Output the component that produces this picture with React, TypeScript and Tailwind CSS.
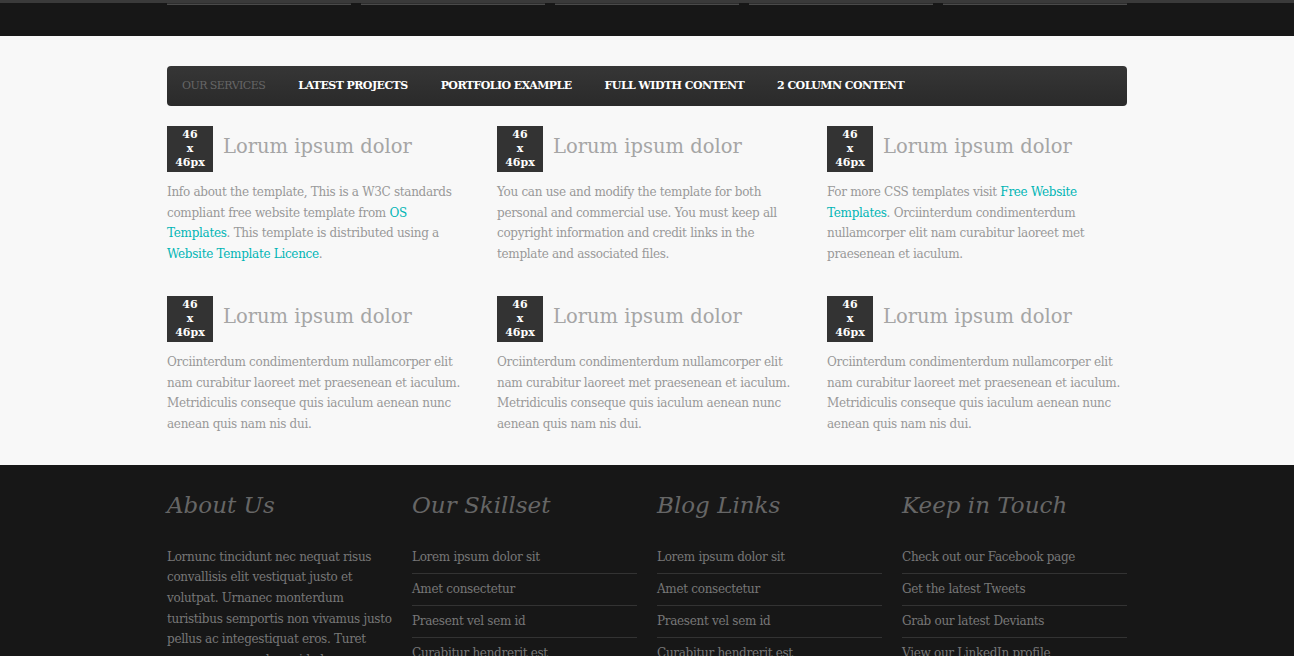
import React from 'react';

const serif = { fontFamily: '"DejaVu Serif", Georgia, serif' };

const navItems = ['Our Services', 'Latest Projects', 'Portfolio Example', 'Full Width Content', '2 Column Content'];

const Placeholder = () => (
  <div className="w-[46px] h-[46px] shrink-0 bg-[#333333] text-white text-[11px] leading-[14px] font-bold flex flex-col items-center justify-center">
    <span>46</span>
    <span>x</span>
    <span>46px</span>
  </div>
);

const Link = ({ children }: { children: React.ReactNode }) => (
  <a href="#" className="text-[#00b5b5]">{children}</a>
);

const services: { body: React.ReactNode }[] = [
  {
    body: (
      <>
        Info about the template, This is a W3C standards compliant free website template from <Link>OS Templates</Link>. This template is distributed using a <Link>Website Template Licence</Link>.
      </>
    ),
  },
  {
    body: <>You can use and modify the template for both personal and commercial use. You must keep all copyright information and credit links in the template and associated files.</>,
  },
  {
    body: (
      <>
        For more CSS templates visit <Link>Free Website Templates</Link>. Orciinterdum condimenterdum nullamcorper elit nam curabitur laoreet met praesenean et iaculum.
      </>
    ),
  },
  { body: <>Orciinterdum condimenterdum nullamcorper elit nam curabitur laoreet met praesenean et iaculum. Metridiculis conseque quis iaculum aenean nunc aenean quis nam nis dui.</> },
  { body: <>Orciinterdum condimenterdum nullamcorper elit nam curabitur laoreet met praesenean et iaculum. Metridiculis conseque quis iaculum aenean nunc aenean quis nam nis dui.</> },
  { body: <>Orciinterdum condimenterdum nullamcorper elit nam curabitur laoreet met praesenean et iaculum. Metridiculis conseque quis iaculum aenean nunc aenean quis nam nis dui.</> },
];

const footerLists = [
  { title: 'Our Skillset', items: ['Lorem ipsum dolor sit', 'Amet consectetur', 'Praesent vel sem id', 'Curabitur hendrerit est'] },
  { title: 'Blog Links', items: ['Lorem ipsum dolor sit', 'Amet consectetur', 'Praesent vel sem id', 'Curabitur hendrerit est'] },
  { title: 'Keep in Touch', items: ['Check out our Facebook page', 'Get the latest Tweets', 'Grab our latest Deviants', 'View our LinkedIn profile'] },
];

export default function App() {
  return (
    <div className="min-h-screen bg-[#171717]" style={serif}>
      {/* top bar */}
      <div className="h-[36px] bg-[#171717] border-t-[3px] border-[#3a3a3a]">
        <div className="w-[960px] mx-auto grid grid-cols-5 gap-[10px]">
          {[0, 1, 2, 3, 4].map((i) => (
            <div key={i} className="h-[2px] bg-[#2e2e2e] border-b border-[#4a4a4a]" />
          ))}
        </div>
      </div>

      {/* content */}
      <div className="bg-[#f8f8f8] pt-[30px] pb-[30px]">
        <div className="w-[960px] mx-auto">
          <nav className="h-[40px] rounded-[4px] bg-gradient-to-b from-[#363636] to-[#2a2a2a] flex items-center px-[15px] gap-[33px]">
            {navItems.map((item, i) => (
              <a
                key={item}
                href="#"
                className={`uppercase text-[11px] tracking-[-0.55px] ${i === 0 ? 'text-[#666666]' : 'text-white font-bold'}`}
              >
                {item}
              </a>
            ))}
          </nav>

          <div className="grid grid-cols-3 gap-x-[30px] gap-y-[31px] mt-[20px]">
            {services.map((s, i) => (
              <div key={i}>
                <div className="flex items-center gap-[10px]">
                  <Placeholder />
                  <h2 className="text-[19.5px] text-[#a5a5a5] leading-none pb-[4px]">Lorum ipsum dolor</h2>
                </div>
                <p className="mt-[10px] text-[12px] leading-[20.7px] text-[#999999] tracking-[-0.3px]">{s.body}</p>
              </div>
            ))}
          </div>
        </div>
      </div>

      {/* footer */}
      <div className="bg-[#171717] pt-[22px]">
        <div className="w-[960px] mx-auto grid grid-cols-4 gap-x-[20px]">
          <div>
            <h3 className="italic text-[23px] text-[#666666] leading-[36px]">About Us</h3>
            <p className="mt-[24px] text-[12px] leading-[20.7px] text-[#777777] tracking-[-0.3px]">
              Lornunc tincidunt nec nequat risus convallisis elit vestiquat justo et volutpat. Urnanec monterdum turistibus semportis non vivamus justo pellus ac integestiquat eros. Turet nunc posuere sed gravida leo.
            </p>
          </div>
          {footerLists.map((col) => (
            <div key={col.title}>
              <h3 className="italic text-[23px] text-[#666666] leading-[36px]">{col.title}</h3>
              <ul className="mt-[24px]">
                {col.items.map((item) => (
                  <li key={item} className="border-b border-[#333333] leading-[20px] pb-[6px] pt-[5px] first:pt-0 text-[12px] text-[#777777] tracking-[-0.3px]">
                    <a href="#">{item}</a>
                  </li>
                ))}
              </ul>
            </div>
          ))}
        </div>
      </div>
    </div>
  );
}
